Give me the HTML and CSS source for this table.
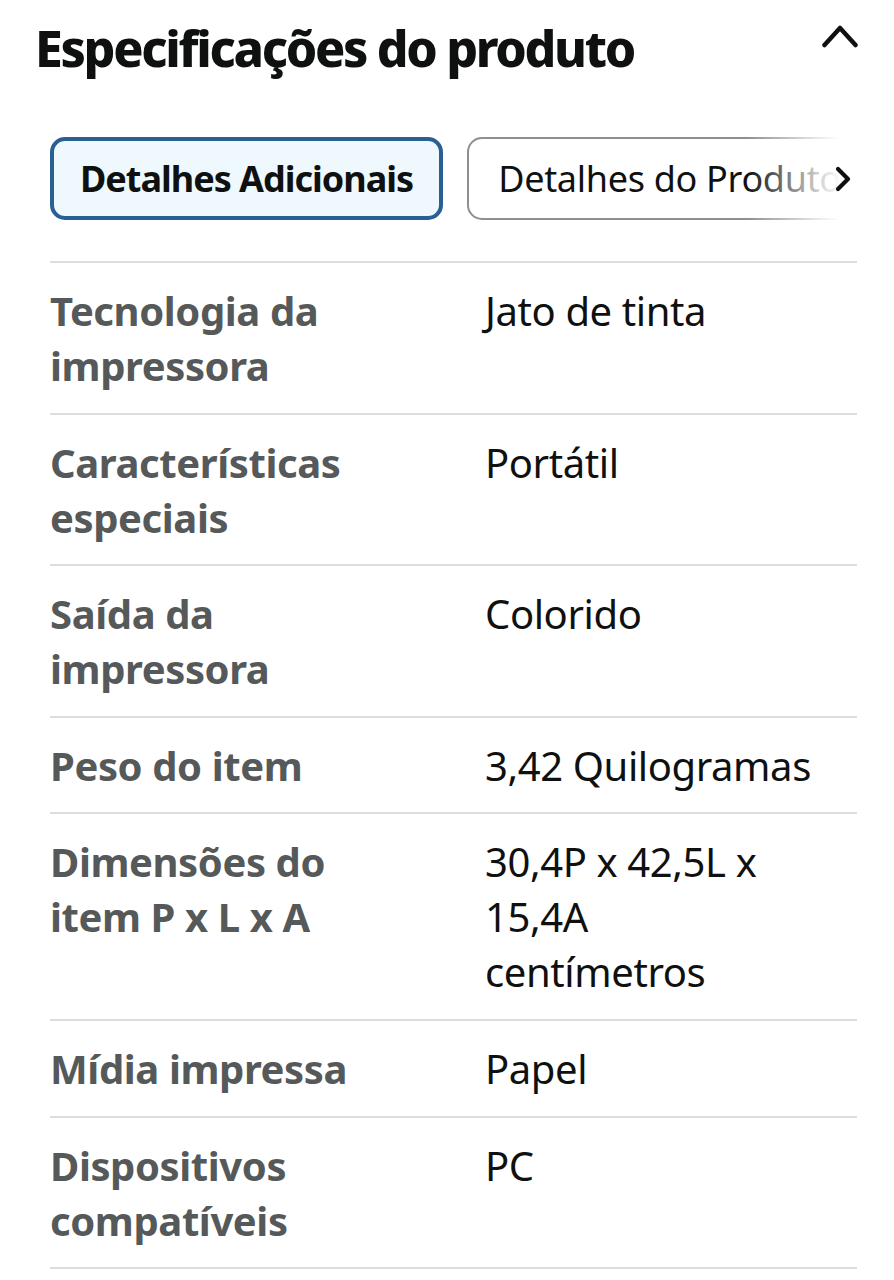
FILE: index.html
```html
<!DOCTYPE html>
<html lang="pt-BR">
<head>
<meta charset="utf-8">
<title>Especificações do produto</title>
<link rel="stylesheet" href="styles.css">
</head>
<body>
<section class="specs">
  <header class="specs-header">
    <h2 class="specs-title">Especificações do produto</h2>
    <svg class="collapse-icon" width="36" height="26" viewBox="0 0 36 26" aria-hidden="true">
      <path d="M2.5 22 L18 5 L33.5 22" fill="none" stroke="#0f1111" stroke-width="4.5" stroke-linecap="round" stroke-linejoin="round"/>
    </svg>
  </header>

  <div class="tabs">
    <button class="tab tab-active">Detalhes Adicionais</button>
    <button class="tab">Detalhes do Produto</button>
    <div class="tabs-fade">
      <svg class="tabs-arrow" width="18" height="26" viewBox="0 0 18 26" aria-hidden="true">
        <path d="M4 3 L14 13 L4 23" fill="none" stroke="#0f1111" stroke-width="4.2" stroke-linecap="round" stroke-linejoin="round"/>
      </svg>
    </div>
  </div>

  <div class="spec-table">
    <div class="spec-row">
      <div class="spec-label">Tecnologia da impressora</div>
      <div class="spec-value">Jato de tinta</div>
    </div>
    <div class="spec-row">
      <div class="spec-label">Características especiais</div>
      <div class="spec-value">Portátil</div>
    </div>
    <div class="spec-row">
      <div class="spec-label">Saída da impressora</div>
      <div class="spec-value">Colorido</div>
    </div>
    <div class="spec-row">
      <div class="spec-label">Peso do item</div>
      <div class="spec-value">3,42 Quilogramas</div>
    </div>
    <div class="spec-row">
      <div class="spec-label">Dimensões do item P x L x A</div>
      <div class="spec-value">30,4P x 42,5L x<br>15,4A<br>centímetros</div>
    </div>
    <div class="spec-row">
      <div class="spec-label">Mídia impressa</div>
      <div class="spec-value">Papel</div>
    </div>
    <div class="spec-row">
      <div class="spec-label">Dispositivos compatíveis</div>
      <div class="spec-value">PC</div>
    </div>
  </div>
</section>
</body>
</html>
```

FILE: styles.css
```css
* {
  box-sizing: border-box;
}

html, body {
  margin: 0;
  padding: 0;
  background: #ffffff;
}

body {
  font-family: "Noto Sans", "Open Sans", sans-serif;
  color: #0f1111;
}

.specs {
  padding: 18px 37px 0 50px;
}

.specs-header {
  display: flex;
  align-items: flex-start;
  justify-content: space-between;
  margin-left: -15px;
}

.specs-title {
  margin: 0;
  font-size: 50px;
  line-height: 60px;
  font-weight: 800;
  letter-spacing: -2.3px;
  color: #0f1111;
}

.collapse-icon {
  display: block;
  margin-top: 5px;
  margin-right: -1px;
}

.tabs {
  position: relative;
  display: flex;
  gap: 24px;
  margin-top: 59px;
  overflow: hidden;
}

.tab {
  flex-shrink: 0;
  font-family: inherit;
  font-size: 36px;
  line-height: 45px;
  height: 83px;
  padding: 0 29px;
  border-radius: 15px;
  border: 2px solid #8d9090;
  background: #ffffff;
  color: #0f1111;
  white-space: nowrap;
  font-weight: 400;
  letter-spacing: -0.3px;
}

.tab-active {
  border: 4px solid #2a5f93;
  background: #eef8fd;
  font-weight: 700;
  padding: 0 26px;
  letter-spacing: -1px;
}

.tabs-fade {
  position: absolute;
  top: 0;
  right: 0;
  bottom: 0;
  width: 110px;
  display: flex;
  align-items: center;
  justify-content: flex-end;
  background: linear-gradient(to right, rgba(255, 255, 255, 0) 0%, rgba(255, 255, 255, 0.8) 65%, #ffffff 85%);
}

.tabs-arrow {
  display: block;
  margin-right: 5px;
}

.spec-table {
  margin-top: 41px;
  border-bottom: 2px solid #dddddd;
}

.spec-row {
  display: grid;
  grid-template-columns: 435px 1fr;
  padding: 20px 0 19.6px;
  border-top: 2px solid #dddddd;
  font-size: 40px;
  line-height: 55px;
}

.spec-label {
  padding-right: 80px;
  font-weight: 700;
  color: #565959;
  letter-spacing: -0.4px;
}

.spec-value {
  color: #0f1111;
  letter-spacing: -0.4px;
}
```
